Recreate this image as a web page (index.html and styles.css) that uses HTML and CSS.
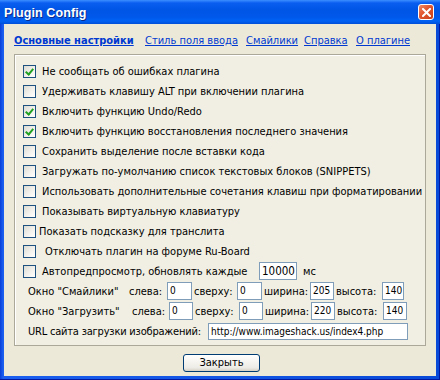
FILE: index.html
```html
<!DOCTYPE HTML>
<html lang="ru">
<head>
    <meta charset="UTF-8">
    <title>Plugin Config</title>
    <link rel="stylesheet" href="styles.css">
</head>
<body>
    <div class="window">
        <div class="titlebar">
            <span class="title">Plugin Config</span>
            <span class="close">
                <svg width="9" height="9" viewBox="0 0 9 9"><path d="M1 1 L8 8 M8 1 L1 8" stroke="#fff" stroke-width="2" stroke-linecap="square"/></svg>
            </span>
        </div>
        <div class="client">
            <nav class="tabs">
                <span class="tab t1"><a class="active">Основные настройки</a></span>
                <span class="tab t2"><a>Стиль поля ввода</a></span>
                <span class="tab t3"><a>Смайлики</a></span>
                <span class="tab t4"><a>Справка</a></span>
                <span class="tab t5"><a>О плагине</a></span>
            </nav>
            <div class="panel">
                <div class="row"><span class="check on"></span><span class="text">Не сообщать об ошибках плагина</span></div>
                <div class="row"><span class="check"></span><span class="text">Удерживать клавишу ALT при включении плагина</span></div>
                <div class="row"><span class="check on"></span><span class="text">Включить функцию Undo/Redo</span></div>
                <div class="row"><span class="check on"></span><span class="text">Включить функцию восстановления последнего значения</span></div>
                <div class="row"><span class="check"></span><span class="text">Сохранить выделение после вставки кода</span></div>
                <div class="row"><span class="check"></span><span class="text">Загружать по-умолчанию список текстовых блоков (SNIPPETS)</span></div>
                <div class="row"><span class="check"></span><span class="text">Использовать дополнительные сочетания клавиш при форматировании</span></div>
                <div class="row"><span class="check"></span><span class="text">Показывать виртуальную клавиатуру</span></div>
                <div class="row"><span class="check"></span><span class="text tight">Показать подсказку для транслита</span></div>
                <div class="row"><span class="check"></span><span class="text wide">Отключать плагин на форуме Ru-Board</span></div>
                <div class="row"><span class="check"></span><span class="text autolabel">Автопредпросмотр, обновлять каждые</span><span class="field big w38">10000</span><span class="unit">мс</span></div>
                <div class="row sub">
                    <span class="lbl" style="width:101px">Окно "Смайлики"</span>
                    <span class="lbl" style="width:38px">слева:</span><span class="field" style="width:25px">0</span>
                    <span class="lbl pad" style="width:45px">сверху:</span><span class="field" style="width:25px">0</span>
                    <span class="lbl pad" style="width:48px">ширина:</span><span class="field" style="width:24px">205</span>
                    <span class="lbl pad" style="width:48px">высота:</span><span class="field" style="width:22px">140</span>
                </div>
                <div class="row sub">
                    <span class="lbl" style="width:104px">Окно "Загрузить"</span>
                    <span class="lbl" style="width:37px">слева:</span><span class="field" style="width:24px">0</span>
                    <span class="lbl pad" style="width:46px">сверху:</span><span class="field" style="width:24px">0</span>
                    <span class="lbl pad" style="width:48px">ширина:</span><span class="field" style="width:24px">220</span>
                    <span class="lbl pad" style="width:48px">высота:</span><span class="field" style="width:24px">140</span>
                </div>
                <div class="row sub">
                    <span class="lbl url-label" style="width:180px">URL сайта загрузки изображений:</span>
                    <span class="field url">http://www.imageshack.us/index4.php</span>
                </div>
            </div>
            <div class="footer">
                <button class="btn" type="button">Закрыть</button>
            </div>
        </div>
    </div>
</body>
</html>
```

FILE: styles.css
```css
body {
    margin: 0;
    background: #ffffff;
    font-family: "DejaVu Sans Condensed", "DejaVu Sans", sans-serif;
    font-size: 11px;
    color: #000;
}

.window {
    width: 440px;
    height: 380px;
    display: flex;
    flex-direction: column;
    background: linear-gradient(to right, #0a3ed8 0, #1a5fef 3px, #0a4ad8 100%);
    box-shadow: inset -1px -1px 0 #0019a0;
}

.titlebar {
    height: 24px;
    flex: none;
    display: flex;
    align-items: center;
    justify-content: space-between;
    padding: 0 6px 0 4px;
    background: linear-gradient(to bottom, #3d8fff 0, #0a5df0 3px, #0055e5 10px, #0058ea 17px, #0062f4 21px, #004fd8 24px);
}

.title {
    font-family: "Liberation Sans", sans-serif;
    font-weight: bold;
    font-size: 12.5px;
    color: #fff;
    letter-spacing: 0.1px;
    text-shadow: 1px 1px 0 #0a2a8a;
    margin-top: 1px;
}

.close {
    width: 14px;
    height: 14px;
    border: 1px solid #fff;
    border-radius: 3px;
    background: linear-gradient(135deg, #f08a66 0, #e0552e 45%, #c8401a 100%);
    display: flex;
    align-items: center;
    justify-content: center;
}

.client {
    flex: 1;
    margin: 0 4px 4px 4px;
    background: #ece9d8;
    padding: 10px 10px 0 10px;
    display: flex;
    flex-direction: column;
}

.tabs {
    display: flex;
    height: 14px;
    line-height: 14px;
}

.tab a {
    color: #0039d0;
    text-decoration: underline;
}
.tab a.active { font-weight: bold; }
.t1 { width: 131px; }
.t2 { width: 101px; }
.t3 { width: 58px; }
.t4 { width: 52px; }

.panel {
    margin-top: 6px;
    height: 292px;
    box-sizing: border-box;
    border: 1px solid #aca899;
    box-shadow: inset 1px 1px 0 #ffffff;
    background: #f1efe3;
    padding: 6px 8px 4px 8px;
}

.row {
    height: 20px;
    display: flex;
    align-items: center;
    white-space: nowrap;
}

.check {
    width: 13px;
    height: 13px;
    box-sizing: border-box;
    flex: none;
    border: 1px solid #1c5180;
    background: linear-gradient(135deg, #dcdbd3 0, #f4f3ee 60%, #ffffff 100%);
    position: relative;
}
.check.on::after {
    content: "";
    position: absolute;
    left: 3px;
    top: 1px;
    width: 3px;
    height: 6px;
    border-right: 2px solid #21a121;
    border-bottom: 2px solid #21a121;
    transform: rotate(40deg);
}

.text { margin-left: 6px; }
.text.tight { margin-left: 3px; }
.text.wide { margin-left: 9px; }
.text.autolabel { width: 217px; flex: none; }

.field {
    height: 18px;
    box-sizing: border-box;
    border: 1px solid #7f9db9;
    background: #fff;
    padding-left: 2px;
    line-height: 16px;
    font-size: 10px;
    flex: none;
    overflow: hidden;
}
.field.big { font-size: 11.5px; padding-left: 2px; }
.w38 { width: 38px; }
.field.url { width: 200px; height: 17px; line-height: 15px; }

.unit { margin-left: 6px; }

.sub { padding-left: 5px; }
.lbl { flex: none; }
.lbl.pad { padding-left: 2px; box-sizing: border-box; }
.url-label { letter-spacing: -0.2px; }

.footer {
    display: flex;
    justify-content: center;
    padding-left: 3px;
    margin-top: 8px;
}

.btn {
    width: 77px;
    height: 18px;
    border: 1px solid #003c74;
    border-radius: 3px;
    background: linear-gradient(to bottom, #ffffff 0, #f4f3ee 50%, #ecebe6 80%, #d6d0c5 100%);
    font-family: "DejaVu Sans Condensed", "DejaVu Sans", sans-serif;
    font-size: 11px;
    color: #000;
    padding: 0;
    line-height: 16px;
}
```
